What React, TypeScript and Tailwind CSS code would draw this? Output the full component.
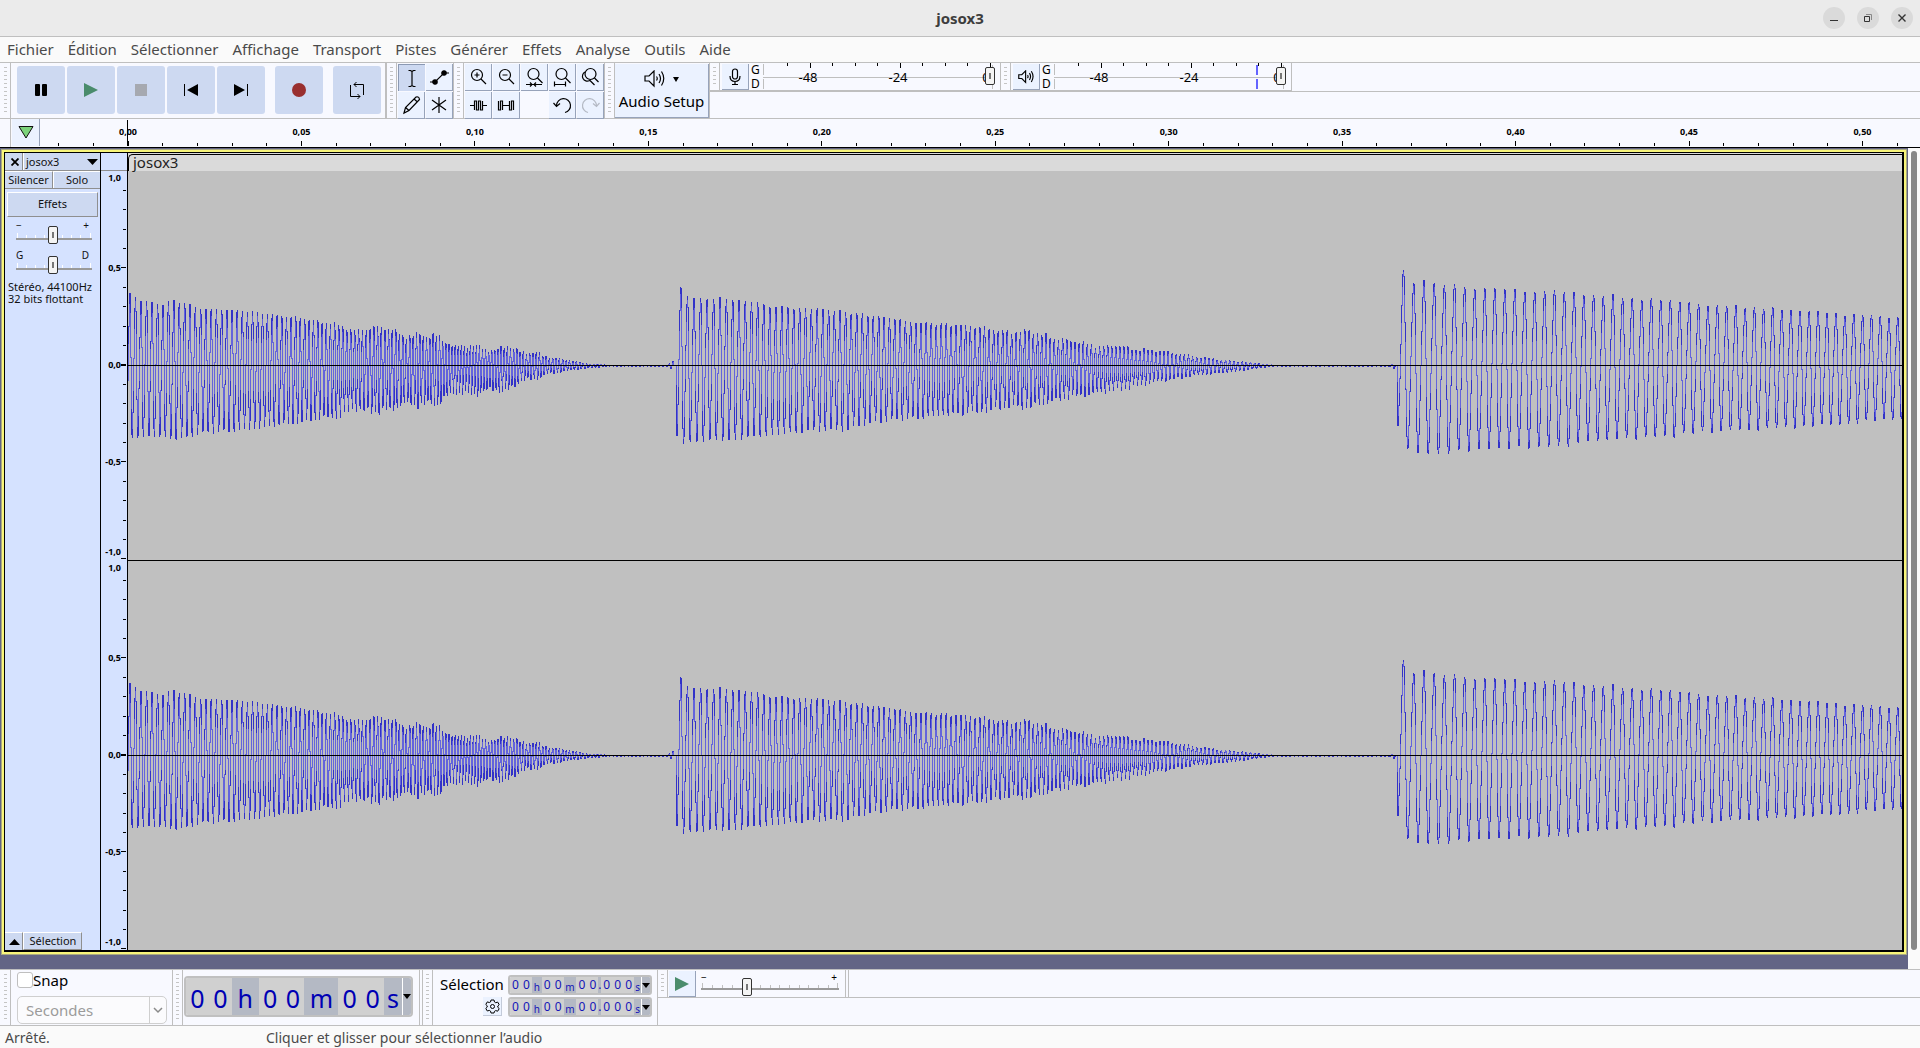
import React from 'react';

const MENUS = ['Fichier', 'Édition', 'Sélectionner', 'Affichage', 'Transport', 'Pistes', 'Générer', 'Effets', 'Analyse', 'Outils', 'Aide'];

const CLIP_WIDTH = 1774;
const CHANNEL_HEIGHT = 389;
const MID = 194;
const SECONDS_VISIBLE = 0.5114;
const STEPS = 12;

interface Burst {
  start: number;
  end: number;
  phase: number;
  // [x, length of one cycle]
  periods: number[][];
  // [x, height above zero, depth below zero]
  env: number[][];
  // [x, relative unevenness of the peaks]
  wobble: number[][];
}

const BURSTS: Burst[] = [
  {
    start: 0, end: 546, phase: 0.95,
    periods: [[0, 5.6], [120, 5.1], [207, 4.1], [285, 3.4], [337, 3], [420, 3.3], [546, 4]],
    wobble: [[0, 0.01], [180, 0.015], [230, 0.05], [400, 0.1], [546, 0.1]],
    env: [
      [0, 72, 71], [12, 65, 71], [32, 60, 70], [42, 64, 73], [57, 62, 72], [72, 56, 67], [102, 55, 65], [132, 52, 62],
      [152, 49, 58], [172, 47, 57], [192, 43, 52], [212, 40, 51], [227, 34, 42], [242, 37, 46], [262, 37, 44], [274, 29, 38],
      [292, 30, 39], [308, 29, 38], [327, 18, 26], [342, 20, 29], [367, 14, 23], [379, 20, 26], [392, 13, 15], [408, 12, 13],
      [420, 8, 8], [440, 5, 5], [455, 2, 3], [480, 0.4, 0.6], [540, 0.4, 0.6], [543, 4, 4], [546, 4, 5],
    ],
  },
  {
    start: 549, end: 1267, phase: 0.72,
    periods: [[549, 6.7], [650, 6], [772, 5.3], [912, 4.2], [1000, 4], [1267, 4.4]],
    wobble: [[549, 0.01], [800, 0.02], [900, 0.04], [1000, 0.07], [1267, 0.07]],
    env: [
      [549, 80, 70], [554, 76, 77], [559, 69, 76], [572, 66, 75], [600, 66, 74], [622, 63, 71], [642, 59, 69], [662, 57, 67],
      [690, 56, 64], [717, 53, 64], [737, 50, 58], [762, 47, 54], [790, 42, 52], [802, 42, 50], [852, 38, 46], [885, 32, 40],
      [898, 35, 42], [925, 27, 35], [950, 23, 30], [974, 18, 26], [988, 20, 25], [1004, 16, 21], [1035, 14, 15], [1065, 9, 10],
      [1096, 5, 7], [1120, 3, 4], [1145, 0.4, 0.6], [1260, 0.4, 0.6], [1267, 2, 3],
    ],
  },
  {
    start: 1270, end: 1774, phase: 0.76,
    periods: [[1270, 10.3], [1410, 9.9], [1500, 9.6], [1630, 9.2], [1774, 8.7]],
    wobble: [[1270, 0.01], [1774, 0.02]],
    env: [
      [1270, 100, 65], [1277, 94, 80], [1285, 82, 86], [1296, 84, 87], [1311, 80, 88], [1326, 80, 86], [1347, 76, 83],
      [1377, 76, 82], [1402, 73, 81], [1437, 74, 80], [1457, 69, 75], [1475, 70, 74], [1502, 66, 72], [1542, 65, 70],
      [1572, 60, 66], [1632, 57, 63], [1700, 52, 59], [1774, 47, 52],
    ],
  },
];

function valueAt(keys: number[][], x: number, col: number): number {
  for (let i = 1; i < keys.length; i++) {
    const a = keys[i - 1];
    const b = keys[i];
    if (x <= b[0]) return a[col] + ((b[col] - a[col]) * (x - a[0])) / (b[0] - a[0]);
  }
  return keys[keys.length - 1][col];
}

function buildSamples() {
  const samples = new Array<number>(CLIP_WIDTH * STEPS + 1).fill(0);
  for (const burst of BURSTS) {
    let cycles = burst.phase;
    for (let i = burst.start * STEPS; i <= burst.end * STEPS; i++) {
      const x = i / STEPS;
      const p = cycles * Math.PI * 2;
      const v = (Math.sin(p) - 0.16 * Math.sin(2 * p)) / 1.04;
      const wobble = 1 + valueAt(burst.wobble, x, 1) * (Math.sin(x * 0.31) + 0.8 * Math.sin(x * 0.83));
      samples[i] = v * valueAt(burst.env, x, v > 0 ? 1 : 2) * wobble;
      cycles += 1 / (STEPS * valueAt(burst.periods, x, 1));
    }
  }
  return samples;
}

function buildWave() {
  const samples = buildSamples();
  let peaks = '';
  let rms = '';
  for (let x = 0; x < CLIP_WIDTH; x++) {
    const slice = samples.slice(x * STEPS, (x + 1) * STEPS + 1);
    const min = Math.min(...slice);
    const max = Math.max(...slice);
    const r = Math.sqrt(slice.reduce((sum, v) => sum + v * v, 0) / slice.length);
    const y0 = Math.round(MID - max);
    const y1 = Math.max(y0 + 1, Math.round(MID - min) + 1);
    peaks += `M${x} ${y0}h1V${y1}h-1z`;
    const r0 = Math.max(y0, Math.round(MID - r));
    const r1 = Math.min(y1, Math.round(MID + r));
    if (r1 - r0 > 1) rms += `M${x} ${r0}h1V${r1}h-1z`;
  }
  return { peaks, rms };
}

const WAVE = buildWave();

const Channel = () => (
  <svg className="block w-full flex-1 min-h-0" viewBox={`0 0 ${CLIP_WIDTH} ${CHANNEL_HEIGHT}`} preserveAspectRatio="none" shapeRendering="crispEdges">
    <path d={WAVE.peaks} fill="#3232c8" />
    <path d={WAVE.rms} fill="#6464dc" />
    <path d={`M0 ${MID}h${CLIP_WIDTH}v1h-${CLIP_WIDTH}z`} fill="#000" />
  </svg>
);

const LEVELS = ['1,0', '', '', '', '', '0,5', '', '', '', '', '0,0', '', '', '', '', '-0,5', '', '', '', '', '-1,0'];

const LevelRuler = () => (
  <svg className="block w-full flex-1 min-h-0 overflow-visible" shapeRendering="crispEdges">
    {LEVELS.map((label, i) => (
      <React.Fragment key={i}>
        {i > 0 && (
          <line x1={label ? 20 : 22} x2="25" y1={`${i * 4.98}%`} y2={`${i * 4.98}%`} stroke="#000" strokeWidth={i === 10 ? 2 : 1} />
        )}
        {label && (
          <text x="20" y={`${i * 4.98}%`} dy={i === 0 ? 10 : i === 20 ? -4 : 3} textAnchor="end" className="text-[9px] font-bold">
            {label}
          </text>
        )}
      </React.Fragment>
    ))}
  </svg>
);

const timeToX = (seconds: number) => `${(seconds / SECONDS_VISIBLE) * 100}%`;

const TimeRuler = () => (
  <svg className="block h-full flex-1 overflow-visible" shapeRendering="crispEdges">
    {Array.from({ length: 54 }, (_, i) => i - 2).map((i) => {
      const x = timeToX(i * 0.01);
      const major = i % 5 === 0;
      return (
        <React.Fragment key={i}>
          <line x1={x} x2={x} y1={major ? 22 : 24} y2="27" stroke="#000" />
          {major && (
            <text x={x} y="16" textAnchor="middle" className="text-[9px] font-bold">
              {(i * 0.01).toFixed(2).replace('.', ',')}
            </text>
          )}
        </React.Fragment>
      );
    })}
    <line x1="-1" x2="-1" y1="1" y2="27" stroke="#000" />
  </svg>
);

const Grabber = () => (
  <div className="w-[10px] shrink-0 self-stretch border-r border-[#bfbfbf] px-[3px] py-1">
    <div className="h-full bg-[repeating-linear-gradient(to_bottom,#c4c4c4_0_1px,transparent_1px_4px)]" />
  </div>
);

const TransportButton = ({ label, className = '', children }: { label: string; className?: string; children: React.ReactNode }) => (
  <button aria-label={label} className={`size-12 rounded-[3px] bg-[#cdd9f1] ${className}`}>
    <svg width="48" height="48" viewBox="0 0 48 48">{children}</svg>
  </button>
);

const ToolButton = ({ label, active = false, children }: { label: string; active?: boolean; children: React.ReactNode }) => (
  <button
    aria-label={label}
    className={
      active
        ? 'size-[27px] border-t border-l border-[#8b99b3] bg-[#cdd9f1]'
        : 'size-[27px] border-r border-b border-[#97a3ba] bg-[#ebf2ff]'
    }
  >
    <svg width="26" height="26" viewBox="0 0 26 26" fill="none" stroke="#000" strokeWidth="1.2">{children}</svg>
  </button>
);

const SpeakerPaths = () => (
  <>
    <path d="M1 6h4l5-5v15l-5-5H1z" />
    <path d="M12.5 6.500q1.500 2 0 4M15 4q3 4.500 0 9M17.500 1.500q4.500 7 0 14" />
  </>
);

const Thumb = ({ className }: { className: string }) => (
  <span className={`absolute h-[18px] w-[10px] rounded-[2px] border border-[#333] bg-[#f4f4f4] ${className}`}>
    <span className="mx-auto mt-[5px] block h-[6px] w-[2px] bg-[#777]" />
  </span>
);

interface MeterProps {
  name: string;
  peak?: boolean;
  icon: React.ReactNode;
}

const Meter = ({ name, peak = false, icon }: MeterProps) => (
  <div className="flex h-7 w-[291px] border-r border-b border-[#bfbfbf]">
    <Grabber />
    <button aria-label={name} className="ml-[2px] mt-px flex h-[26px] w-[27px] items-center justify-center border-r border-b border-[#97a3ba] bg-[#ebf2ff]">
      {icon}
    </button>
    <div className="ml-[2px] flex w-[11px] flex-col text-[12px] leading-[14px]">
      <span>G</span>
      <span>D</span>
    </div>
    <div className="relative flex-1">
      <svg className="block h-full w-full" shapeRendering="crispEdges">
        <path d="M1.500 1v11M1.500 16v10M1 14.500h232M230.500 2v24" stroke="#bfbfbf" />
        {Array.from({ length: 10 }, (_, i) => (
          <line key={i} x1={25 + Math.round(i * 22.5)} x2={25 + Math.round(i * 22.5)} y1="0" y2={i % 4 === 1 ? 5 : 3} stroke="#000" />
        ))}
        {peak && <path d="M204 2v10M204 16v10" stroke="#6464ff" strokeWidth="2" />}
        <text x="46" y="19" textAnchor="middle" className="text-[13px]">-48</text>
        <text x="136" y="19" textAnchor="middle" className="text-[13px]">-24</text>
        <text x="224" y="19" textAnchor="middle" className="text-[13px]">0</text>
      </svg>
      <Thumb className="left-[223px] top-1" />
    </div>
  </div>
);

const PanelSlider = ({ name, low, high }: { name: string; low: string; high: string }) => (
  <div className="relative h-[30px] pl-[11px] pr-2">
    <input type="range" aria-label={name} className="absolute inset-0 h-full w-full opacity-0" />
    <div className="flex justify-between text-[10px] leading-3">
      <span>{low}</span>
      <span className="pr-[3px]">{high}</span>
    </div>
    <svg className="mt-[2px] block h-2 w-full" viewBox="0 0 76 8" shapeRendering="crispEdges">
      <path d="M1.500 0v5M10.500 2v3M19.500 2v3M28.500 2v3M46.500 2v3M55.500 2v3M64.500 2v3M74.500 0v5" stroke="#fff" />
      <path d="M0 6h76" stroke="#9a9a9a" strokeWidth="2" />
    </svg>
    <Thumb className="left-[43px] top-[7px]" />
  </div>
);

const TimeDigits = ({ big = false, parts }: { big?: boolean; parts: [string, string][] }) => (
  <div className={`flex shrink-0 overflow-hidden border-2 border-[#c0c0c0] ${big ? 'h-[41px] w-[229px] rounded-[4px] text-[25px] text-[#0000b4]' : 'h-5 w-[144px] rounded-[3px] text-[12px] text-[#1414b8]'}`}>
    {parts.map(([text, width], i) => (
      <span
        key={i}
        className={`flex items-center justify-around ${width} ${/\d/.test(text) ? 'bg-[#d0d0d0]' : 'bg-[#b4b9c4]'} ${!big && /[hms]/.test(text) ? 'pt-1 text-[10px]' : ''} ${big ? 'pt-1' : ''}`}
      >
        {text.split('').map((c, k) => <span key={k}>{c}</span>)}
      </span>
    ))}
    <button aria-label="Format" className="flex flex-1 items-center justify-center border-l border-white bg-[#b4b9c4]">
      <svg width="8" height="5" viewBox="0 0 8 5"><path d="M0 0h8L4 5z" fill="#000" /></svg>
    </button>
  </div>
);

const DURATION: [string, string][] = [
  ['00', 'w-[46px]'], ['h', 'w-[27px]'], ['00', 'w-[46px]'], ['m', 'w-[34px]'], ['00', 'w-[46px]'], ['s', 'w-[18px]'],
];

const SELECTION: [string, string][] = [
  ['00', 'w-[22px]'], ['h', 'w-[10px]'], ['00', 'w-[22px]'], ['m', 'w-[13px]'], ['00', 'w-[22px]'], ['.', 'w-[3px]'], ['000', 'w-[33px]'], ['s', 'w-[7px]'],
];

const TitleBar = () => (
  <header className="flex h-[37px] shrink-0 items-center border-b border-[#bfbfbf] bg-[#ebebeb] px-[7px] text-[#3d3d3d]">
    <div className="flex-1" />
    <h1 className="text-[15px] leading-5 font-bold">josox3</h1>
    <div className="flex flex-1 justify-end gap-3">
      <button aria-label="Réduire" className="size-[22px] rounded-full bg-[#dadada]">
        <svg width="22" height="22"><path d="M7 13.500h8" stroke="#333" /></svg>
      </button>
      <button aria-label="Restaurer" className="size-[22px] rounded-full bg-[#dadada]">
        <svg width="22" height="22" fill="none"><path d="M9 7.500h5.500V13" stroke="#888" /><path d="M7.500 9.500h5v5h-5z" stroke="#333" /></svg>
      </button>
      <button aria-label="Fermer" className="size-[22px] rounded-full bg-[#dadada]">
        <svg width="22" height="22"><path d="M7.500 7.500l7 7M14.500 7.500l-7 7" stroke="#333" strokeWidth="1.4" /></svg>
      </button>
    </div>
  </header>
);

const Toolbars = () => (
  <div className="flex h-[56px] shrink-0 border-b border-[#bfbfbf]">
    <div className="flex w-[387px] border-r-2 border-[#bfbfbf] pl-px">
      <Grabber />
      <div className="flex items-start gap-[2px] pl-[6px] pt-[3px]">
        <TransportButton label="Pause"><rect x="18" y="18" width="5" height="12" rx="1" /><rect x="25" y="18" width="5" height="12" rx="1" /></TransportButton>
        <TransportButton label="Lecture"><path d="M17 17l14 7-14 7z" fill="#4a8c6c" /></TransportButton>
        <TransportButton label="Arrêt"><path d="M18 18h12v12H18z" fill="#a6a9b0" /></TransportButton>
        <TransportButton label="Début"><path d="M17 18h1v12h-1zM31 18v12l-11-6z" /></TransportButton>
        <TransportButton label="Fin"><path d="M30 18h1v12h-1zM17 18v12l11-6z" /></TransportButton>
        <TransportButton label="Enregistrer" className="ml-2"><circle cx="24" cy="24" r="7" fill="#992f2f" /></TransportButton>
        <TransportButton label="Boucle" className="ml-2">
          <path d="M17.500 19v11.500H27M30.500 29V18.500H21M23.500 16L21 18.500l2.500 2.500M24.500 28l2.500 2.500-2.500 2.500" fill="none" stroke="#000" />
        </TransportButton>
      </div>
    </div>

    <Grabber />
    <div className="grid grid-cols-[27px_27px] content-start gap-px pl-px pt-px">
      <ToolButton label="Sélection" active><path d="M9.500 5.500h2l1.500 1 1.500-1h2M13 6.500v14M9.500 21.500h2l1.500-1 1.500 1h2" /></ToolButton>
      <ToolButton label="Enveloppe"><path d="M4 18h5l9-9h5" /><circle cx="9" cy="18" r="2.200" fill="#000" /><circle cx="18" cy="9" r="2.200" fill="#000" /></ToolButton>
      <ToolButton label="Dessin"><path d="M6 21l1.500-5.500L18 5q3-1 3.500 2.500L11 18.500zM7.500 15.500l3.500 3M16 7l3.500 3" /></ToolButton>
      <ToolButton label="Multi-outils"><path d="M13 5v16M6 8l14 10M20 8L6 18" /></ToolButton>
    </div>

    <div className="flex border-l border-[#bfbfbf]">
      <Grabber />
      <div className="grid grid-cols-[27px_27px_27px_27px_27px] content-start gap-px pl-px pt-px">
        <ToolButton label="Zoom avant"><circle cx="12" cy="11" r="5.500" /><path d="M16 15l5 5M9.500 11h5M12 8.500v5" /></ToolButton>
        <ToolButton label="Zoom arrière"><circle cx="12" cy="11" r="5.500" /><path d="M16 15l5 5M9.500 11h5" /></ToolButton>
        <ToolButton label="Zoomer sur la sélection"><circle cx="12.500" cy="10" r="5.500" /><path d="M16.500 14l5 5M5 20.500h16M9 18.500l2 2-2 2M15 18.500l-2 2 2 2" /></ToolButton>
        <ToolButton label="Ajuster au projet"><circle cx="12.500" cy="10" r="5.500" /><path d="M16.500 14l5 5M5.500 17.500v5M16.500 17.500v5M5.500 20.500h11" /></ToolButton>
        <ToolButton label="Bascule de zoom"><circle cx="13.500" cy="10" r="5.500" /><path d="M17.500 14l4 4M8 8a4.500 4.500 0 1 0 4.500 8.500M12.500 16l5 5" /></ToolButton>
        <ToolButton label="Rogner"><path d="M5 13.500h4.500M9.500 18V9h2v9h2V9h2v9h2V9M17.500 13.500H22" /></ToolButton>
        <ToolButton label="Silence"><path d="M5.500 9v9h2V9h2v9M9.500 13.500h7M16.500 9v9h2V9h2v9" /></ToolButton>
        <span />
        <ToolButton label="Annuler"><path d="M7.500 13.500a7 7 0 1 1 8.500 7M4.500 11l3 3.500 3.500-3" /></ToolButton>
        <ToolButton label="Rétablir"><g stroke="#b5bac5"><path d="M19.500 13.500a7 7 0 1 0-8.500 7M22.500 11l-3 3.500-3.500-3" /></g></ToolButton>
      </div>
    </div>

    <div className="flex border-l border-[#bfbfbf]">
      <Grabber />
      <button className="mt-px flex h-[54px] w-[94px] flex-col items-center border-r border-b border-[#97a3ba] bg-[#ebf2ff]">
        <span className="flex h-[30px] items-center gap-2">
          <svg width="21" height="18" viewBox="0 0 21 18" fill="none" stroke="#000" strokeWidth="1.2"><SpeakerPaths /></svg>
          <svg width="6" height="5" viewBox="0 0 6 5"><path d="M0 0h6L3 5z" /></svg>
        </span>
        <span className="whitespace-nowrap text-[15px] leading-[14px]">Audio Setup</span>
      </button>
    </div>

    <div className="flex flex-1 flex-col border-l border-[#bfbfbf]">
      <div className="flex border-b border-[#bfbfbf]">
        <Meter
          name="Niveau d'enregistrement"
          icon={
            <svg width="12" height="18" viewBox="0 0 12 18" fill="none" stroke="#000" strokeWidth="1.200">
              <rect x="3.500" y="1" width="5" height="10" rx="2.500" />
              <path d="M1 8q0 5.500 5 5.500T11 8M6 13.500V16M3 16.500h6" />
            </svg>
          }
        />
        <Meter
          name="Niveau de lecture"
          peak
          icon={<svg width="16" height="14" viewBox="0 0 21 18" fill="none" stroke="#000" strokeWidth="1.500"><SpeakerPaths /></svg>}
        />
      </div>
    </div>
  </div>
);

const TrackPanel = () => (
  <aside className="flex w-[95px] shrink-0 flex-col bg-[#d5e2ff] text-[11px] text-[#111]">
    <div className="flex h-[18px] border-b border-[#8f8f8f]">
      <button aria-label="Fermer la piste" className="flex w-[18px] items-center justify-center border-r border-[#8f8f8f] bg-[#cdd9f1] pl-[2px] pt-px">
        <svg width="8" height="8" viewBox="0 0 8 8"><path d="M.5.5l7 7M7.500.5l-7 7" stroke="#000" strokeWidth="1.800" /></svg>
      </button>
      <button className="flex flex-1 items-center justify-between border-l border-white bg-[#cdd9f1] pl-[2px] pr-[2px] pt-px">
        josox3
        <svg width="11" height="6" viewBox="0 0 11 6"><path d="M0 0h11L5.500 6z" /></svg>
      </button>
    </div>
    <div className="flex h-[18px] border-b border-[#8f8f8f]">
      <button className="w-[48px] border-t border-r border-t-white border-r-[#8f8f8f] bg-[#cdd9f1]">Silencer</button>
      <button className="flex-1 border-t border-l border-white bg-[#cdd9f1]">Solo</button>
    </div>
    <button className="mx-[2px] mt-[3px] h-[25px] border border-t-white border-l-white border-r-[#8f8f8f] border-b-[#8f8f8f] bg-[#cdd9f1]">Effets</button>
    <div className="pt-[2px]">
      <PanelSlider name="Gain" low="−" high="+" />
      <PanelSlider name="Balance" low="G" high="D" />
    </div>
    <p className="whitespace-nowrap pl-[3px] pt-[2px] leading-3">
      Stéréo, 44100Hz
      <br />
      32 bits flottant
    </p>
    <div className="mt-auto flex h-[18px]">
      <button aria-label="Replier" className="flex w-[18px] items-center justify-center border-t border-r border-t-white border-r-[#8f8f8f] bg-[#cdd9f1] pl-px">
        <svg width="11" height="6" viewBox="0 0 11 6"><path d="M0 6h11L5.500 0z" /></svg>
      </button>
      <button className="w-[59px] border border-t-white border-l-white border-r-[#8f8f8f] border-b-[#8f8f8f] bg-[#cdd9f1] pl-px">Sélection</button>
    </div>
  </aside>
);

const Tracks = () => (
  <main className="flex min-h-0 flex-1">
    <div className="flex min-w-0 flex-1 bg-[#636585] pb-[14px] pl-px pr-px pt-px">
      <div className="flex min-w-0 flex-1 border border-[#a9a983]">
        <div className="flex min-w-0 flex-1 border-2 border-[#f8f57a]">
          <div className="flex min-w-0 flex-1 border-t border-r-2 border-b-2 border-l border-black">
            <TrackPanel />
            <div className="flex w-[28px] shrink-0 flex-col border-x border-black bg-[#d5e2ff]">
              <div className="h-[18px] shrink-0 border-b border-[#8f8f8f]" />
              <LevelRuler />
              <LevelRuler />
            </div>
            <div className="flex min-w-0 flex-1 flex-col bg-[#c0c0c0]">
              <div className="h-[18px] shrink-0 bg-[#dadada] pt-px">
                <div className="h-[17px] rounded-tl-[5px] border-t border-l border-black pl-1 text-[15px] leading-[14px] text-[#222]">josox3</div>
              </div>
              <Channel />
              <div className="h-px shrink-0 bg-black" />
              <Channel />
            </div>
          </div>
        </div>
      </div>
    </div>
    <div className="w-3 bg-[#fafafa] pb-[19px] pl-[3px] pr-[3px] pt-[3px]">
      <div className="h-full rounded-full bg-[#878787]" />
    </div>
  </main>
);

const BottomBar = () => (
  <div className="flex h-[57px] shrink-0 border-t border-b border-[#bfbfbf]">
    <div className="flex w-[173px] border-r border-[#bfbfbf] pl-px">
      <Grabber />
      <div className="flex flex-col pl-[6px] pt-px">
        <div className="flex h-[18px] items-center">
          <input id="snap" type="checkbox" className="size-4 appearance-none rounded-[3px] border border-[#bfbfbf] bg-white" />
          <label htmlFor="snap" className="text-[15px]">Snap</label>
        </div>
        <div className="relative mt-[7px] h-7 w-[150px]">
          <select aria-label="Unité" className="h-full w-full appearance-none rounded-[5px] border border-[#cfcfcf] bg-[#fbfbfd] pl-2 text-[15px] text-[#9b9b9b]">
            <option>Secondes</option>
          </select>
          <svg className="pointer-events-none absolute right-0 top-0" width="19" height="28" fill="none">
            <path d="M1.500 1v26" stroke="#cfcfcf" />
            <path d="M6 12l4 4 4-4" stroke="#8a8a8a" strokeWidth="1.500" />
          </svg>
        </div>
      </div>
    </div>
    <div className="flex w-[247px] border-r border-[#bfbfbf]">
      <Grabber />
      <div className="pl-px pt-[6px]">
        <TimeDigits big parts={DURATION} />
      </div>
    </div>
    <div className="ml-[2px] flex w-[236px] border-l border-r border-[#bfbfbf]">
      <Grabber />
      <div className="grid grid-cols-[62px_144px] content-start gap-x-[6px] gap-y-[2px] pl-[7px] pt-[5px]">
        <span className="text-[15px] leading-[18px]">Sélection</span>
        <TimeDigits parts={SELECTION} />
        <button aria-label="Options" className="ml-auto flex size-[19px] items-center justify-center border-r border-b border-[#c3cad9] bg-[#ebf2ff]">
          <svg width="15" height="15" viewBox="0 0 15 15" fill="none" stroke="#000" strokeWidth="1">
            <path d="M6 1h3l.5 2 1.200.7 2-.6 1.500 2.600-1.400 1.300v1.300l1.400 1.300-1.500 2.600-2-.6-1.200.7L9 14H6l-.5-1.900-1.200-.7-2 .6L.8 9.400l1.400-1.300V6.800L.8 5.500l1.500-2.600 2 .6L5.500 3z" />
            <circle cx="7.500" cy="7.500" r="2" />
          </svg>
        </button>
        <TimeDigits parts={SELECTION} />
      </div>
    </div>
    <div className="flex-1">
      <div className="flex h-7 border-b border-[#bfbfbf]">
        <Grabber />
        <button aria-label="Lire à vitesse" className="ml-px mt-px flex h-[26px] w-[27px] items-center justify-center border-r border-b border-[#97a3ba] bg-[#ebf2ff]">
          <svg width="14" height="14" viewBox="0 0 14 14"><path d="M0 0l14 7-14 7z" fill="#4a8c6c" /></svg>
        </button>
        <div className="relative ml-[5px] mr-[6px] w-[138px]">
          <input type="range" aria-label="Vitesse" className="absolute inset-0 h-full w-full opacity-0" />
          <div className="flex h-[13px] justify-between text-[10px] leading-[15px]">
            <span>−</span>
            <span className="pr-[2px]">+</span>
          </div>
          <svg className="block" width="138" height="7" shapeRendering="crispEdges">
            <path d="M1.500 0v5M11.500 2v3M21.500 2v3M31.500 2v3M59.500 2v3M69.500 2v3M78.500 2v3M88.500 2v3M98.500 2v3M107.500 2v3M117.500 2v3M127.500 2v3M136.500 0v5" stroke="#c0c0c0" />
            <path d="M0 6h138" stroke="#9a9a9a" strokeWidth="2" />
          </svg>
          <Thumb className="left-[41px] top-2" />
        </div>
        <div className="w-1 border-x border-[#bfbfbf]" />
      </div>
    </div>
  </div>
);

export default function App() {
  return (
    <div className="flex h-screen min-w-[1310px] flex-col overflow-hidden bg-[#f8f9ff] font-['Noto_Sans',sans-serif] text-black">
      <TitleBar />
      <nav className="flex h-[26px] shrink-0 items-center gap-[14px] border-b border-[#bfbfbf] bg-[#fafafa] pb-[2px] pl-[7px] text-[15px] leading-5 text-[#4a4a4a]">
        {MENUS.map((menu) => (
          <button key={menu}>{menu}</button>
        ))}
      </nav>
      <Toolbars />
      <div className="flex h-[29px] shrink-0 border-b border-black pr-[18px]">
        <div className="w-[11px] border-r border-[#bfbfbf]" />
        <button aria-label="Options de la règle" className="mb-px ml-px mr-[88px] flex w-[28px] items-center justify-center border-r border-[#97a3ba] bg-[#ebf2ff] pl-px">
          <svg width="16" height="13" viewBox="0 0 16 13"><path d="M1 .5h14l-7 11.500z" fill="#7bd37b" stroke="#111" /></svg>
        </button>
        <TimeRuler />
      </div>
      <Tracks />
      <BottomBar />
      <footer className="flex h-[22px] shrink-0 items-center bg-[#fafafa] pl-[5px] text-[14px] text-[#4a4a4a]">
        <span className="w-[261px]">Arrêté.</span>
        <span>Cliquer et glisser pour sélectionner l’audio</span>
      </footer>
    </div>
  );
}
